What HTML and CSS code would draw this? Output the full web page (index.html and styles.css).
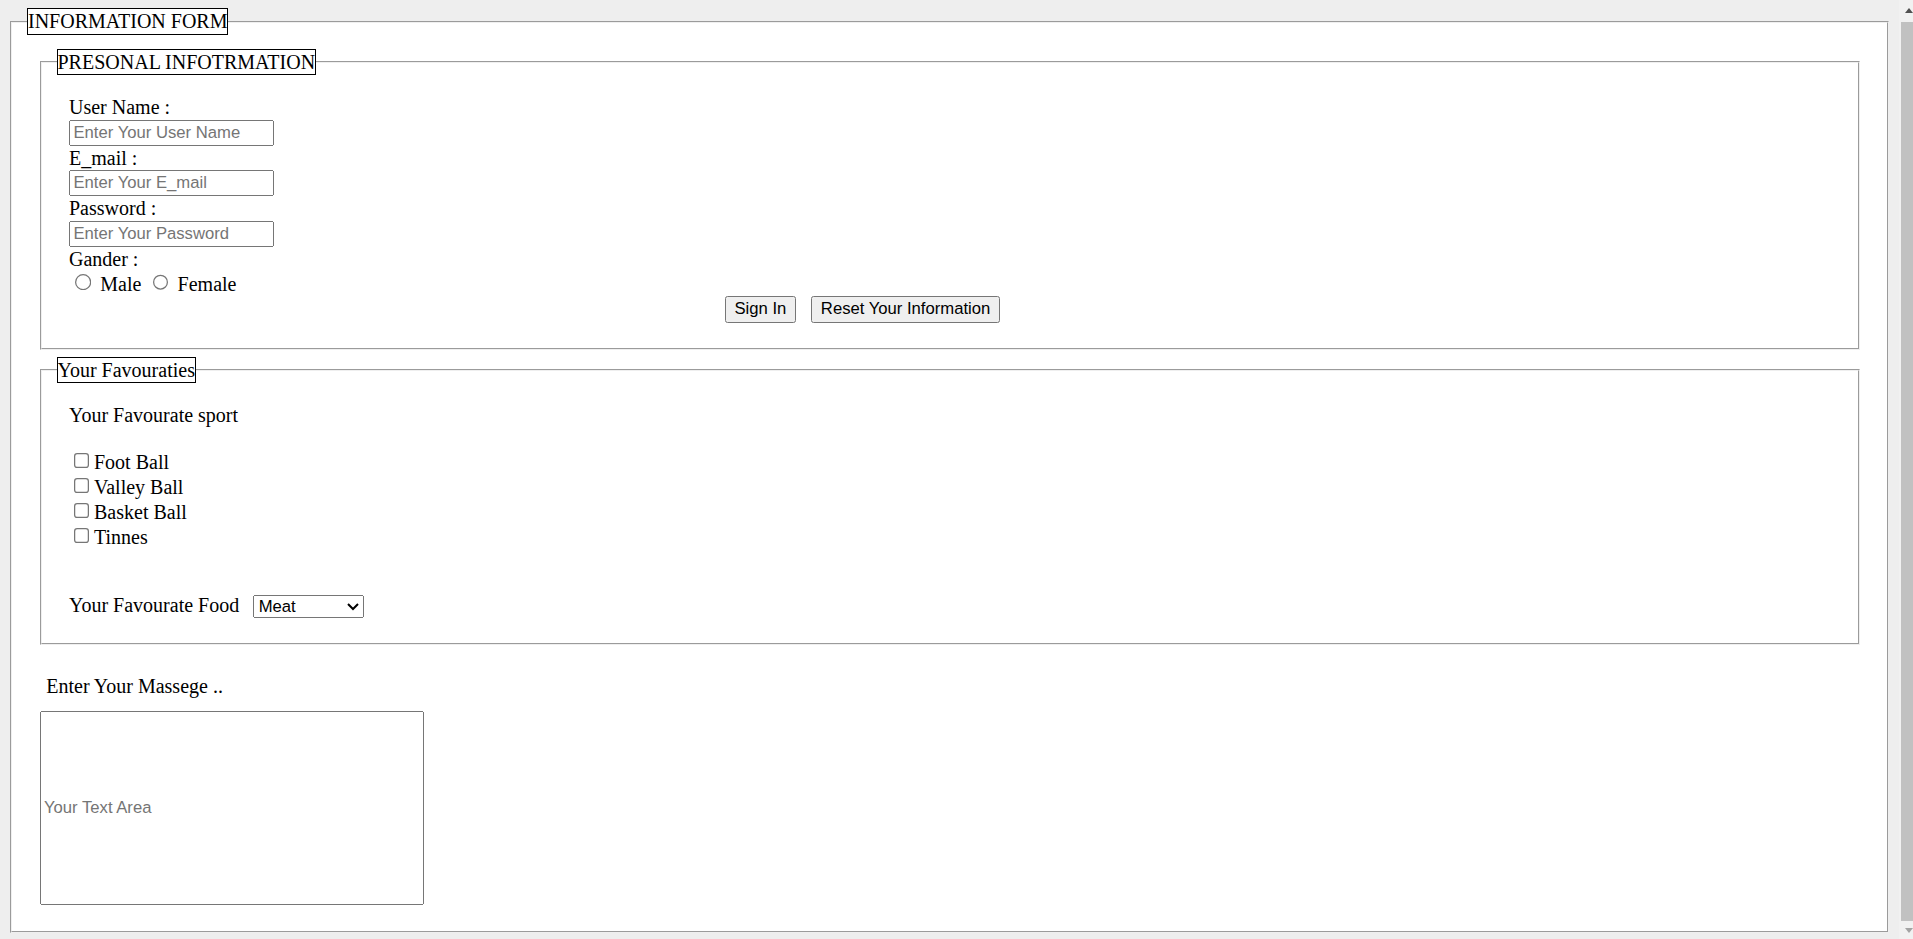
FILE: index.html
```html
<!DOCTYPE html>
<html lang="en">
<head>
<meta charset="utf-8">
<title>Information Form</title>
<link rel="stylesheet" href="styles.css">
</head>
<body>
<form class="info-form">
  <fieldset class="outer">
    <legend class="outer-legend">INFORMATION FORM</legend>

    <fieldset class="section">
      <legend class="section-legend">PRESONAL INFOTRMATION</legend>
      <div class="section-body">
        <label class="field-label" for="user">User Name :</label>
        <input class="text-field" id="user" type="text" placeholder="Enter Your User Name">
        <label class="field-label" for="mail">E_mail :</label>
        <input class="text-field" id="mail" type="text" placeholder="Enter Your E_mail">
        <label class="field-label" for="pass">Password :</label>
        <input class="text-field" id="pass" type="password" placeholder="Enter Your Password">
        <div class="field-label">Gander :</div>
        <div class="line"><input type="radio" name="gender" id="male"> <label for="male">Male</label> <input type="radio" name="gender" id="female"> <label for="female">Female</label></div>
        <div class="actions">
          <button class="btn" type="button">Sign In</button>
          <button class="btn" type="reset">Reset Your Information</button>
        </div>
      </div>
    </fieldset>

    <fieldset class="section">
      <legend class="section-legend">Your Favouraties</legend>
      <div class="section-body">
        <div class="sport-title">Your Favourate sport</div>
        <div class="checks">
          <div class="check-row"><input type="checkbox" id="s1"><label for="s1">Foot Ball</label></div>
          <div class="check-row"><input type="checkbox" id="s2"><label for="s2">Valley Ball</label></div>
          <div class="check-row"><input type="checkbox" id="s3"><label for="s3">Basket Ball</label></div>
          <div class="check-row"><input type="checkbox" id="s4"><label for="s4">Tinnes</label></div>
        </div>
        <div class="food line"><label for="food">Your Favourate Food</label><select id="food" class="food-select">
            <option>Meat</option>
            <option>Chicken</option>
            <option>Fish</option>
          </select></div>
      </div>
    </fieldset>

    <div class="message">
      <label for="msg" class="msg-label">Enter Your Massege ..</label>
      <input id="msg" class="msg-box" type="text" placeholder="Your Text Area">
    </div>
  </fieldset>
</form>

<div class="scrollbar" aria-hidden="true">
  <span class="arrow-up"></span>
  <span class="thumb"></span>
  <span class="arrow-down"></span>
</div>
</body>
</html>
```

FILE: styles.css
```css
html {
  zoom: 1.25;
  background: #eeeeee;
  overflow: hidden;
}

body {
  margin: 6.4px 19.2px 8px 8px;
  font-family: "Liberation Serif", "Times New Roman", serif;
  font-size: 16px;
  line-height: 19.2px;
  color: #000;
}

input,
button,
select {
  font-family: "Liberation Sans", Arial, sans-serif;
  font-size: 13.333px;
}

.info-form {
  margin: 0;
}

fieldset {
  margin: 0;
  padding: 5.6px 12px 10px;
  background: #ffffff;
}

legend {
  padding: 0;
  border: 1px solid #000;
  background: #ffffff;
}

.outer-legend {
  line-height: 20px;
}

.section-legend {
  line-height: 19.2px;
}

.section {
  margin: 5.6px 10px 0;
}

.section-body {
  padding: 10.4px 10px 9.6px;
}

.field-label {
  display: block;
  line-height: 19.2px;
}

.text-field {
  display: block;
  box-sizing: border-box;
  width: 164px;
  height: 20.8px;
  margin: 0.4px 0 0;
}

.line {
  line-height: 19.2px;
}

.actions {
  display: flex;
  gap: 12.4px;
  padding-left: 524.8px;
}

.btn {
  box-sizing: border-box;
  height: 22.2px;
  margin: 0;
}

.sport-title {
  line-height: 19.2px;
  margin-bottom: 18.1px;
}

.check-row {
  height: 20px;
  line-height: 19.2px;
}

.food {
  margin-top: 35px;
}

.food-select {
  box-sizing: border-box;
  height: 18.4px;
  width: 89.2px;
  margin: 0 0 0 10.8px;
}

.message {
  margin-top: 23.2px;
}

.msg-label {
  display: block;
  line-height: 19.2px;
  margin-left: 15.4px;
}

.msg-box {
  display: block;
  box-sizing: border-box;
  width: 307.6px;
  height: 155.2px;
  margin: 10.9px 10px 10.8px;
}

.scrollbar {
  position: fixed;
  top: 0;
  right: 0;
  bottom: 0;
  width: 11.2px;
  background: #f1f1f1;
}

.thumb {
  position: absolute;
  left: 1.6px;
  right: 0;
  top: 17.6px;
  bottom: 14.4px;
  background: #c1c1c1;
}

.arrow-up,
.arrow-down {
  position: absolute;
  left: 4.8px;
  width: 0;
  height: 0;
  border-left: 3.2px solid transparent;
  border-right: 3.2px solid transparent;
}

.arrow-up {
  top: 6.4px;
  border-bottom: 4px solid #505050;
}

.arrow-down {
  bottom: 4.8px;
  border-top: 4px solid #a3a3a3;
}
```
